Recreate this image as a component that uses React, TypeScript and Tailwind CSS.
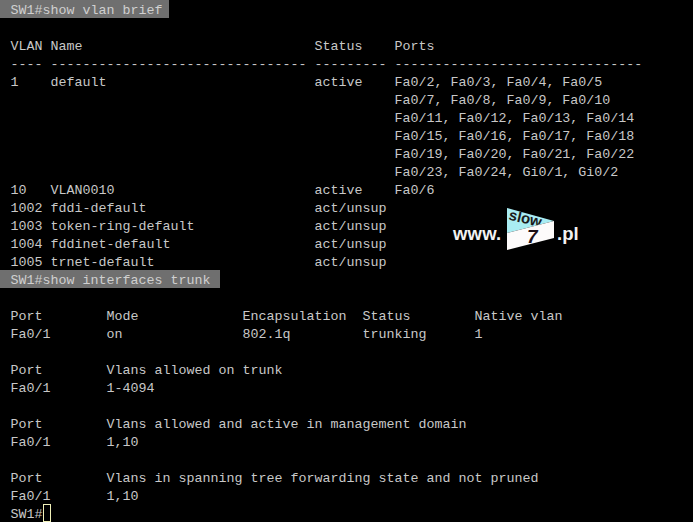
const LINES: { text: string; hl?: string }[] = [
  { text: "SW1#show vlan brief", hl: "w-[169px]" },
  { text: "" },
  { text: "VLAN Name                             Status    Ports" },
  { text: "---- -------------------------------- --------- -------------------------------" },
  { text: "1    default                          active    Fa0/2, Fa0/3, Fa0/4, Fa0/5" },
  { text: "                                                Fa0/7, Fa0/8, Fa0/9, Fa0/10" },
  { text: "                                                Fa0/11, Fa0/12, Fa0/13, Fa0/14" },
  { text: "                                                Fa0/15, Fa0/16, Fa0/17, Fa0/18" },
  { text: "                                                Fa0/19, Fa0/20, Fa0/21, Fa0/22" },
  { text: "                                                Fa0/23, Fa0/24, Gi0/1, Gi0/2" },
  { text: "10   VLAN0010                         active    Fa0/6" },
  { text: "1002 fddi-default                     act/unsup" },
  { text: "1003 token-ring-default               act/unsup" },
  { text: "1004 fddinet-default                  act/unsup" },
  { text: "1005 trnet-default                    act/unsup" },
  { text: "SW1#show interfaces trunk", hl: "w-[220px]" },
  { text: "" },
  { text: "Port        Mode             Encapsulation  Status        Native vlan" },
  { text: "Fa0/1       on               802.1q         trunking      1" },
  { text: "" },
  { text: "Port        Vlans allowed on trunk" },
  { text: "Fa0/1       1-4094" },
  { text: "" },
  { text: "Port        Vlans allowed and active in management domain" },
  { text: "Fa0/1       1,10" },
  { text: "" },
  { text: "Port        Vlans in spanning tree forwarding state and not pruned" },
  { text: "Fa0/1       1,10" },
];

function Logo() {
  return (
    <div className="absolute left-[453px] top-[205px] flex h-[48px] w-[130px] items-center font-['Liberation_Sans',sans-serif] text-[18.5px] font-bold text-[#f2f2f2]">
      <span className="w-[54px] pt-[8px] tracking-[0.2px]">www.</span>
      <svg width="48" height="46" viewBox="0 0 48 46" className="shrink-0">
        <defs>
          <clipPath id="top-face">
            <polygon points="0,2 47,15 0,26" />
          </clipPath>
        </defs>
        <polygon points="0,2 47,15 0,27" fill="#a9ecf2" />
        <g clipPath="url(#top-face)">
          <text
            x="1"
            y="13.5"
            transform="rotate(13 1 13.5)"
            fontFamily="Liberation Sans"
            fontWeight="bold"
            fontSize="15"
            fill="#1a1a1a"
          >
            slow
          </text>
        </g>
        <polygon points="0,27 47,15 47,32 0,44" fill="#fdfbfb" />
        <text x="20" y="37" fontFamily="Liberation Sans" fontWeight="bold" fontStyle="italic" fontSize="19" fill="#1c1018">
          7
        </text>
      </svg>
      <span className="ml-[2px] pt-[8px]">.pl</span>
    </div>
  );
}

export default function App() {
  return (
    <div className="relative h-[522px] w-[693px] overflow-hidden bg-black font-['Liberation_Mono',monospace] text-[13.34px] leading-[21px] text-[#c8c8c8]">
      {LINES.map((l, i) => (
        <div key={i} className={`h-[18px] whitespace-pre pl-[10.5px] ${l.hl ?? ""} ${l.hl ? "bg-[#6f6f6f] text-[#d0d0d0]" : ""}`}>
          {l.text}
        </div>
      ))}
      <div className="flex h-[18px] whitespace-pre pl-[10.5px]">
        SW1#
        <span className="h-[18px] w-[8px] border border-[#f0f0b8]" />
      </div>
      <Logo />
    </div>
  );
}
